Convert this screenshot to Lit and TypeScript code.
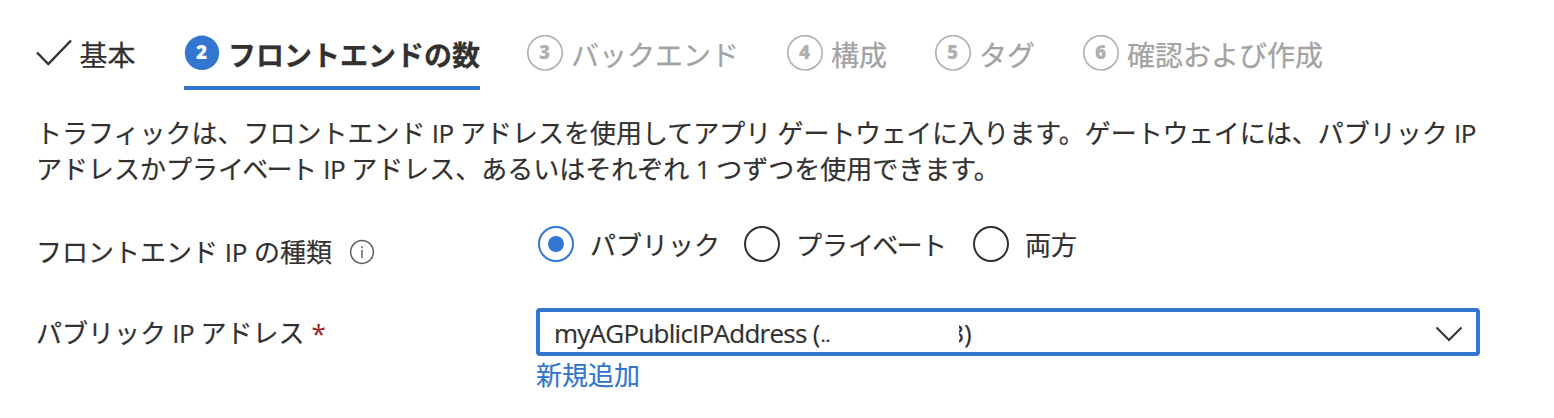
import { LitElement, html, css } from "lit";
import { customElement } from "lit/decorators.js";
import { classMap } from "lit/directives/class-map.js";

interface Step {
  label: string;
  state: "done" | "active" | "todo";
}

const STEPS: Step[] = [
  { label: "基本", state: "done" },
  { label: "フロントエンドの数", state: "active" },
  { label: "バックエンド", state: "todo" },
  { label: "構成", state: "todo" },
  { label: "タグ", state: "todo" },
  { label: "確認および作成", state: "todo" },
];

const IP_TYPES = [
  { label: html`パブリック`, checked: true },
  { label: html`プラ<span class="tight">イベー</span>ト`, checked: false },
  { label: html`両方`, checked: false },
];

@customElement("wizard-tabs")
class WizardTabs extends LitElement {
  static styles = css`
    :host { display: flex; gap: 48px; height: 66px; color: #323130; }
    .tab { display: flex; gap: 8px; height: 62px; box-sizing: border-box; padding-top: 11px; color: #a3a3a3; font-size: 28px; line-height: 40px; white-space: nowrap; -webkit-text-stroke: 0.25px currentColor; }
    .tab.done { color: #323130; }
    .tab.active { color: #323130; font-weight: 700; height: 66px; border-bottom: 4px solid #3276cf; margin-right: -1px; }
    .mark { flex: none; width: 36px; height: 36px; }
    .num { font: 800 19px/20px "Open Sans", "Noto Sans", sans-serif; text-anchor: middle; -webkit-text-stroke: 0; }
    .done .label { margin: 0 0.5px 0 -0.5px; }
  `;

  private mark(step: Step, n: number) {
    if (step.state === "done") {
      return html`<svg class="mark" viewBox="0 0 36 36"><path d="M1 17.5 12.3 29 35 5.5" fill="none" stroke="#323130" stroke-width="2.4"/></svg>`;
    }
    const on = step.state === "active";
    return html`<svg class="mark" viewBox="0 0 36 36">
      <circle cx="18" cy="17.8" r="17.2" fill=${on ? "#3276cf" : "none"} stroke=${on ? "none" : "#b3b3b3"} stroke-width="1.7"/>
      <text class="num" x="17.6" y="24.3" fill=${on ? "#fff" : "#b0b0b0"}>${n}</text>
    </svg>`;
  }

  render() {
    return STEPS.map((s, i) => html`
      <div class=${classMap({ tab: true, [s.state]: true })}>
        ${this.mark(s, i + 1)}<span class="label">${s.label}</span>
      </div>`);
  }
}

@customElement("radio-option")
class RadioOption extends LitElement {
  static properties = { label: {}, checked: { type: Boolean } };
  declare label: unknown;
  declare checked: boolean;
  static styles = css`
    :host { display: flex; gap: 16px; white-space: nowrap; line-height: 38px; }
    svg { flex: none; width: 36px; height: 36px; }
    .tight { letter-spacing: -1.7px; }
  `;
  render() {
    return html`<svg viewBox="0 0 36 36">
        <circle cx="18" cy="18" r="17" fill="#fff" stroke=${this.checked ? "#3276cf" : "#323130"} stroke-width="2"/>
        <circle cx="18" cy="18" r=${this.checked ? 8 : 0} fill="#3276cf"/>
      </svg><span>${this.label}</span>`;
  }
}

@customElement("app-root")
class AppRoot extends LitElement {
  static styles = css`
    :host { display: block; box-sizing: border-box; width: 1554px; height: 418px; padding: 24px 36px 0; overflow: hidden; background: #fff; color: #323130; font-family: "Open Sans", "Noto Sans CJK JP", sans-serif; font-size: 26px; -webkit-text-stroke: 0.2px currentColor; }
    .intro { margin: 25px 0 0; line-height: 36px; white-space: nowrap; }
    .latin { letter-spacing: -0.5px; }
    .last { letter-spacing: -0.5px; }
    .tight { letter-spacing: -1.7px; }
    .snug { letter-spacing: -0.35px; }
    .row { display: grid; grid-template-columns: 500px 944px; }
    .types { margin-top: 38px; height: 52px; }
    .name { display: flex; align-items: center; line-height: 36px; height: 52px; white-space: nowrap; }
    .types .name { padding-top: 1px; }
    .types .latin { letter-spacing: -0.1px; }
    .info { width: 26px; height: 26px; margin-left: 17px; }
    .options { display: flex; padding: 1px 0 0 2px; }
    .options radio-option:nth-child(1) { width: 206px; }
    .options radio-option:nth-child(2) { width: 229px; }
    .address { margin-top: 31px; }
    .address .name { height: 50px; }
    .required { color: #a4262c; margin-left: 7px; }
    .select { display: flex; align-items: center; box-sizing: border-box; height: 48px; padding: 0 14px; border: 4px solid #3276cf; border-radius: 4px; line-height: 40px; white-space: pre; }
    .value { letter-spacing: -0.74px; padding-top: 2px; }
    .dots { font-size: 20px; letter-spacing: -0.5px; padding: 6px 0 0 1px; }
    .cut { display: flex; justify-content: flex-end; width: 5px; overflow: hidden; margin-left: 129px; padding-top: 2px; }
    .close { padding-top: 2px; }
    .chevron { width: 28px; height: 18px; margin: 3px -1px 0 auto; }
    .add { display: block; color: #3276cf; line-height: 36px; margin-top: 1px; }
  `;

  render() {
    return html`
      <wizard-tabs></wizard-tabs>
      <p class="intro">トラフィックは、フロントエンド<span class="latin"> IP </span>アドレスを使用してアプリ<span class="latin"> </span>ゲー<span class="snug">トウェイに入</span>ります。ゲー<span class="snug">トウェ</span>イには、パブリック<span class="last"> IP</span><br>アドレスかプラ<span class="tight">イベー</span>ト<span class="latin"> IP </span>アドレス、あるいはそれぞれ<span class="latin"> 1 </span>つずつを使用できます。</p>
      <div class="row types">
        <div class="name"><span>フロントエンド<span class="latin"> IP </span>の種類</span>
          <svg class="info" viewBox="0 0 26 26"><circle cx="13" cy="13" r="11.4" fill="none" stroke="#605e5c" stroke-width="1.5"/><path d="M13 11v8M13 7.2v2" stroke="#605e5c" stroke-width="1.5"/></svg>
        </div>
        <div class="options">${IP_TYPES.map(t => html`<radio-option .label=${t.label} .checked=${t.checked}></radio-option>`)}</div>
      </div>
      <div class="row address">
        <div class="name"><span>パブリック<span class="latin"> IP </span>アドレス</span><span class="required">*</span></div>
        <div>
          <div class="select"><span class="value">myAGPublicIPAddress (</span><span class="dots">..</span><span class="cut">3</span><span class="close">)</span>
            <svg class="chevron" viewBox="0 0 28 18"><path d="M1.5 2.5 14 15 26.5 2.5" fill="none" stroke="#323130" stroke-width="2"/></svg>
          </div>
          <span class="add">新規追加</span>
        </div>
      </div>`;
  }
}
